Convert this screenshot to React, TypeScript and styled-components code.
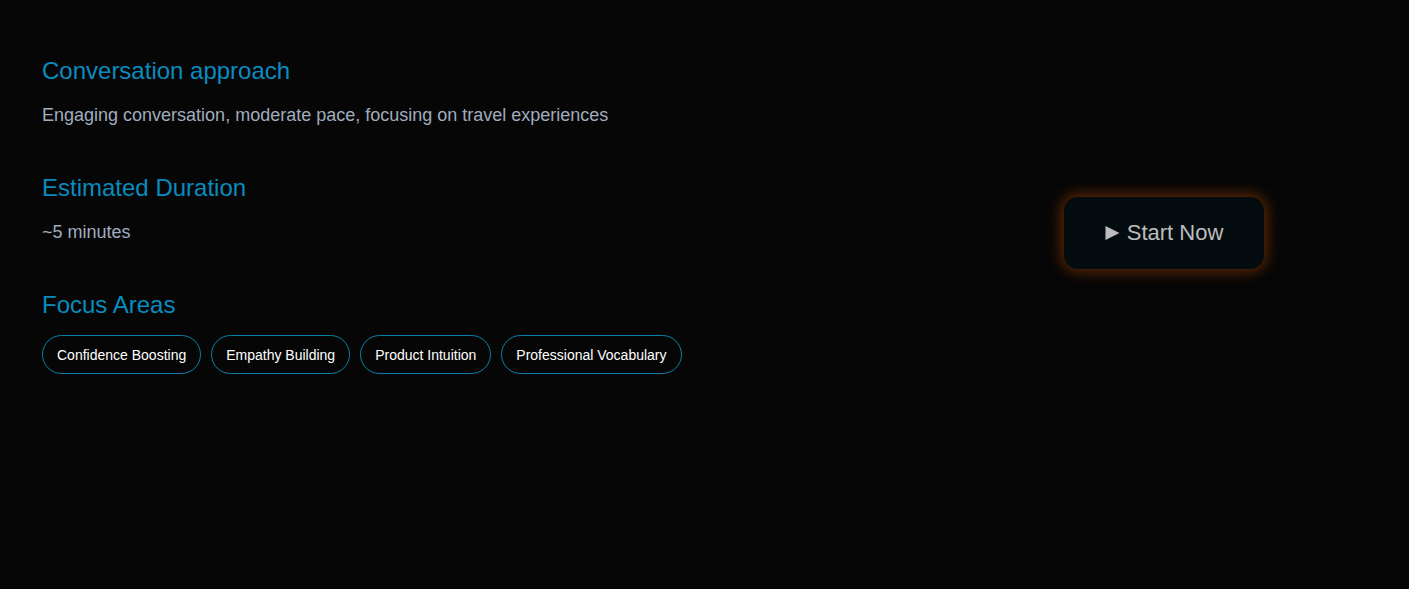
import React from "react";
import styled, { createGlobalStyle } from "styled-components";

const Global = createGlobalStyle`
  html, body { margin: 0; padding: 0; background: #060606; }
  body { font-family: "Liberation Sans", Arial, sans-serif; }
`;

const Page = styled.div`
  min-height: 589px;
  background: #060606;
  display: flex;
  align-items: flex-start;
  padding: 56px 145px 0 42px;
  box-sizing: border-box;
`;

const Left = styled.div`
  flex: 1;
  display: flex;
  flex-direction: column;
`;

const Section = styled.section`
  margin-bottom: 46px;
`;

const Heading = styled.h3`
  margin: 0 0 17px;
  font-size: 24px;
  font-weight: 400;
  line-height: 30px;
  color: #0a8bbf;
`;

const Text = styled.p`
  margin: 0;
  font-size: 18px;
  line-height: 24px;
  color: #a0acbf;
`;

const Chips = styled.div`
  display: flex;
  gap: 10px;
  margin-top: -2px;
`;

const Chip = styled.span`
  display: inline-flex;
  align-items: center;
  height: 39px;
  box-sizing: border-box;
  padding: 0 14px;
  border: 1px solid #0a7fa8;
  border-radius: 20px;
  color: #ffffff;
  font-size: 14px;
`;

const Right = styled.div`
  padding-top: 141px;
`;

const StartButton = styled.button`
  width: 200px;
  height: 72px;
  border: none;
  border-radius: 14px;
  background: #040c10;
  color: #bdbdbd;
  font-family: "Liberation Sans", Arial, sans-serif;
  font-size: 22px;
  display: flex;
  align-items: center;
  justify-content: center;
  gap: 7px;
  box-shadow: 0 0 14px 3px rgba(200, 80, 0, 0.45);
  cursor: pointer;
`;

const Play = styled.svg`
  width: 15px;
  height: 16px;
  fill: #bdbdbd;
`;

export default function App() {
  return (
    <>
      <Global />
      <Page>
        <Left>
          <Section>
            <Heading>Conversation approach</Heading>
            <Text>Engaging conversation, moderate pace, focusing on travel experiences</Text>
          </Section>
          <Section>
            <Heading>Estimated Duration</Heading>
            <Text>~5 minutes</Text>
          </Section>
          <Section>
            <Heading>Focus Areas</Heading>
            <Chips>
              {["Confidence Boosting", "Empathy Building", "Product Intuition", "Professional Vocabulary"].map((c) => (
                <Chip key={c}>{c}</Chip>
              ))}
            </Chips>
          </Section>
        </Left>
        <Right>
          <StartButton>
            <Play viewBox="0 0 15 16">
              <path d="M0.5 1 L14.5 8 L0.5 15 Z" />
            </Play>
            Start Now
          </StartButton>
        </Right>
      </Page>
    </>
  );
}
